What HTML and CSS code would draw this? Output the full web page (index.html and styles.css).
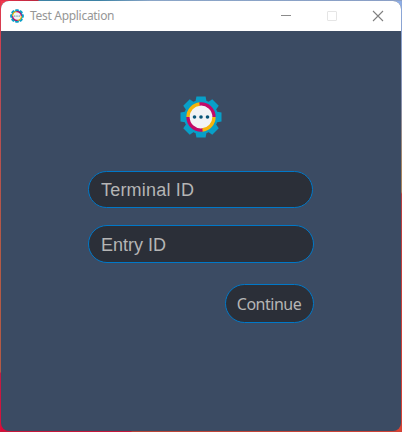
FILE: index.html
```
<!DOCTYPE html>
<html lang="en">
<head>
<meta charset="utf-8">
<title>Test Application</title>
<link rel="stylesheet" href="styles.css">
</head>
<body>
<svg class="defs" width="0" height="0" aria-hidden="true">
  <symbol id="gear" viewBox="-21 -21 42 42">
    <g fill="#089fc8">
      <circle r="17"/>
      <path id="teeth" d="M-5.6-15L-4.6-20.5H4.6L5.6-15V15L4.6 20.5H-4.6L-5.6 15Z"/>
      <use href="#teeth" transform="rotate(45)"/>
      <use href="#teeth" transform="rotate(90)"/>
      <use href="#teeth" transform="rotate(135)"/>
    </g>
    <circle r="13" fill="#f1f3f5"/>
    <g fill="none" stroke-width="3.3">
      <path stroke="#f6b50b" d="M-13 0A13 13 0 0 1-1-13M13 0A13 13 0 0 1 1 13"/>
      <path stroke="#c20968" d="M-1.5-13A13 13 0 0 1 13 0M1.5 13A13 13 0 0 1-13 0"/>
    </g>
    <g fill="#075578"><circle cx="-6.5" r="1.8"/><circle r="1.8"/><circle cx="6.5" r="1.8"/></g>
  </symbol>
</svg>
<div class="window">
  <header class="titlebar">
    <svg class="app-icon"><use href="#gear"/></svg>
    <span class="title">Test Application</span>
    <div class="controls">
      <svg viewBox="0 0 12 12"><path d="M1 5.5h10" stroke="#8b8b8b"/></svg>
      <svg viewBox="0 0 12 12"><rect x="1.5" y="1.5" width="9" height="9" rx=".5" stroke="#e5e5e5"/></svg>
      <svg viewBox="0 0 12 12"><path d="M1 1l10 10M11 1L1 11" stroke="#808080" stroke-width="1.1"/></svg>
    </div>
  </header>
  <main class="content">
    <svg class="logo"><use href="#gear"/></svg>
    <form class="form">
      <input class="field terminal" type="text" placeholder="Terminal ID">
      <input class="field entry" type="text" placeholder="Entry ID">
      <button class="continue" type="button">Continue</button>
    </form>
  </main>
</div>
</body>
</html>
```
FILE: styles.css
```
* { box-sizing: border-box; }
body {
  margin: 0;
  width: 402px;
  height: 432px;
  padding: 1px;
  overflow: hidden;
  background:
    linear-gradient(90deg, #e83049 0, #b9283f 38px, #3d82a5 39px, #3d82a5 100px, #8ba6c8 150px, #8a9fc6 100%) 0 0 / 402px 1px no-repeat,
    linear-gradient(90deg, #c5173b 0 131px, #b84538 132px, #cf4338 100%) 0 431px / 402px 1px no-repeat,
    linear-gradient(#e2384d 0, #b94b55 90px, #b45a45 250px, #b45a45 372px, #c01c43 373px, #d9103a 100%) 0 0 / 1px 432px no-repeat,
    linear-gradient(#8caade 0, #8790ae 100px, #a88460 170px, #a88460 192px, #b84040 194px, #d64335 100%) 401px 0 / 1px 432px no-repeat,
    linear-gradient(#f03b50, #f03b50) 0 0 / 12px 12px no-repeat,
    linear-gradient(#8eaee8, #8eaee8) 390px 0 / 12px 12px no-repeat,
    linear-gradient(#dd0838, #dd0838) 0 420px / 12px 12px no-repeat,
    #dc4333;
  font-family: "Noto Sans", "Open Sans", sans-serif;
}
.defs { position: absolute; }
.window {
  width: 400px;
  height: 430px;
  border-radius: 8px;
  overflow: hidden;
  background: #3b4b63;
  display: flex;
  flex-direction: column;
}
.titlebar {
  height: 30px;
  flex: none;
  background: #fff;
  display: flex;
  align-items: center;
  padding-left: 9px;
}
.app-icon { width: 14px; height: 14px; }
.title {
  margin-left: 6px;
  font-size: 12px;
  line-height: 16px;
  letter-spacing: -.3px;
  color: #969696;
}
.controls {
  margin-left: auto;
  margin-right: 17px;
  display: flex;
  gap: 34px;
}
.controls svg { width: 12px; height: 12px; fill: none; display: block; }
.content {
  flex: 1;
  display: flex;
  flex-direction: column;
  padding: 65px 87px 0;
}
.logo { width: 42px; height: 42px; margin-left: 92px; flex: none; }
.form {
  margin-top: 33px;
  display: flex;
  flex-direction: column;
}
.field, .continue {
  border: 1px solid #0078c8;
  background: #2b2f38;
  color: #b5b5b5;
  outline: none;
}
.field {
  width: 226px;
  height: 38px;
  border-radius: 19px;
  padding: 1px 12px 0;
  font: 18px "Liberation Sans", Arial, sans-serif;
}
.field::placeholder { color: #b5b5b5; opacity: 1; }
.terminal { width: 225px; height: 37px; letter-spacing: .2px; }
.entry { margin-top: 17px; padding-top: 2px; }
.continue {
  align-self: flex-end;
  width: 89px;
  height: 39px;
  margin-top: 21px;
  border-radius: 19.5px;
  padding: 0 1px 0 0;
  font: 16px "Noto Sans", "Open Sans", sans-serif;
  letter-spacing: -.5px;
}
```
